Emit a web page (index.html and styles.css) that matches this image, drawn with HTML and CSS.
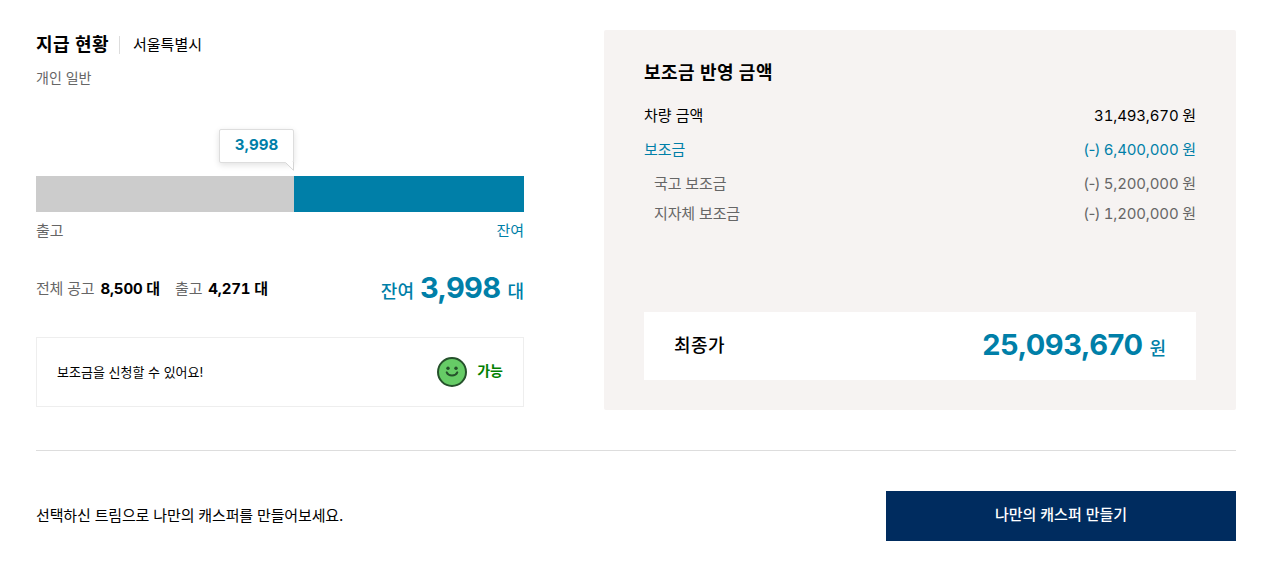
FILE: index.html
```html
<!DOCTYPE html>
<html lang="ko">
<head>
    <meta charset="UTF-8">
    <meta name="viewport" content="width=device-width, initial-scale=1.0">
    <title>보조금 지급 현황</title>
    <link rel="stylesheet" href="styles.css">
</head>
<body>
    <div class="subsidy">
        <section class="status">
            <div class="status-head">
                <h2>지급 현황</h2>
                <span class="region">서울특별시</span>
            </div>
            <p class="type">개인 일반</p>

            <div class="graph">
                <div class="bar">
                    <div class="bar-out" style="width: 258px">
                        <div class="tooltip">
                            <b>3,998</b>
                            <svg class="tail" width="9" height="9" viewBox="0 0 9 9">
                                <path d="M0 0H8V8Z" fill="#fff"/>
                                <path d="M0.5 0.5L8.5 8.3V0" fill="none" stroke="#d5d5d5"/>
                            </svg>
                        </div>
                    </div>
                </div>
                <div class="bar-label">
                    <span>출고</span>
                    <span class="blue">잔여</span>
                </div>
            </div>

            <div class="count">
                <div class="count-list">
                    <span class="c-label">전체 공고</span><b class="c-total">8,500 대</b>
                    <span class="c-label">출고</span><b>4,271 대</b>
                </div>
                <div class="remain">
                    <span>잔여</span><strong>3,998</strong><span>대</span>
                </div>
            </div>

            <div class="apply">
                <p>보조금을 신청할 수 있어요!</p>
                <div class="possible">
                    <svg width="30" height="30" viewBox="0 0 30 30">
                        <circle cx="15" cy="15" r="14" fill="#66cc66" stroke="#25512b" stroke-width="2"/>
                        <circle cx="11" cy="11.2" r="1.7" fill="#25512b"/>
                        <circle cx="19" cy="11.2" r="1.7" fill="#25512b"/>
                        <path d="M9.7 15.4C11.5 19.6 18.5 19.6 20.3 15.4" fill="none" stroke="#25512b" stroke-width="2" stroke-linecap="round"/>
                    </svg>
                    <span>가능</span>
                </div>
            </div>
        </section>

        <section class="price">
            <h2>보조금 반영 금액</h2>
            <dl class="price-list">
                <div class="row"><dt>차량 금액</dt><dd>31,493,670 원</dd></div>
                <div class="row blue"><dt>보조금</dt><dd><span class="minus">(-)</span> 6,400,000 원</dd></div>
                <div class="row sub"><dt>국고 보조금</dt><dd><span class="minus">(-)</span> 5,200,000 원</dd></div>
                <div class="row sub"><dt>지자체 보조금</dt><dd><span class="minus">(-)</span> 1,200,000 원</dd></div>
            </dl>
            <div class="final">
                <span class="final-label">최종가</span>
                <p><strong>25,093,670</strong><span class="final-unit">원</span></p>
            </div>
        </section>
    </div>

    <div class="make">
        <p>선택하신 트림으로 나만의 캐스퍼를 만들어보세요.</p>
        <button type="button">나만의 캐스퍼 만들기</button>
    </div>
</body>
</html>
```

FILE: styles.css
```css
* {
    box-sizing: border-box;
    margin: 0;
    padding: 0;
}
body {
    width: 1200px;
    margin: 0 0 0 36px;
    padding-top: 30px;
    font-family: Inter, 'Noto Sans CJK KR', sans-serif;
    font-size: 15px;
    line-height: 20px;
    color: #000;
    background: #fff;
}
.blue {
    color: #007fa8;
}
.subsidy {
    display: flex;
    justify-content: space-between;
    height: 421px;
    border-bottom: 1px solid #ddd;
}
h2 {
    font-size: 18px;
    font-weight: 700;
    line-height: 28px;
    letter-spacing: 0.5px;
}

/* 지급 현황 */
.status {
    width: 488px;
}
.status-head {
    display: flex;
    align-items: center;
    height: 30px;
}
.region {
    display: flex;
    align-items: center;
    margin-left: 10px;
    padding: 0 0 1px 13px;
    height: 18px;
    border-left: 1px solid #ddd;
}
.type {
    margin-top: 8px;
    font-size: 14px;
    color: #666;
}
.graph {
    margin-top: 88px;
}
.bar {
    height: 36px;
    background: #007fa8;
}
.bar-out {
    position: relative;
    height: 36px;
    background: #ccc;
}
.tooltip {
    position: absolute;
    right: 0;
    bottom: 49px;
    width: 75px;
    height: 34px;
    border: 1px solid #ddd;
    border-radius: 2px;
    background: #fff;
    box-shadow: 0 2px 6px rgba(0, 0, 0, 0.12);
    line-height: 29px;
    text-align: center;
    color: #007fa8;
}
.tail {
    position: absolute;
    right: -1px;
    top: 32px;
}
.bar-label {
    display: flex;
    justify-content: space-between;
    margin-top: 9px;
    color: #666;
}
.bar-label .blue {
    color: #007fa8;
}
.count {
    display: flex;
    justify-content: space-between;
    align-items: center;
    height: 40px;
    margin-top: 28px;
}
.count-list {
    display: flex;
    letter-spacing: -0.2px;
}
.count-list b {
    margin-left: 6px;
    font-weight: 700;
    font-variant-numeric: tabular-nums;
    letter-spacing: -0.15px;
}
.c-label {
    color: #666;
}
.count-list .c-total {
    margin-right: 15px;
}
.remain {
    display: flex;
    align-items: baseline;
    padding-top: 2px;
    font-size: 18px;
    font-weight: 500;
    line-height: 40px;
    color: #007fa8;
}
.remain strong {
    margin: 0 7px 0 6px;
    font-size: 29px;
    font-weight: 650;
    letter-spacing: -0.7px;
}
.apply {
    display: flex;
    justify-content: space-between;
    align-items: center;
    height: 70px;
    margin-top: 28px;
    padding: 0 20px;
    border: 1px solid #eee;
    font-size: 13px;
}
.possible {
    display: flex;
    align-items: center;
    gap: 10px;
    font-size: 14px;
    font-weight: 700;
    color: #008000;
}
.possible span {
    padding-bottom: 2px;
}

/* 보조금 반영 금액 */
.price {
    display: flex;
    flex-direction: column;
    width: 632px;
    height: 380px;
    padding: 29px 40px 30px;
    border-radius: 2px;
    background: #f6f3f2;
}
.price-list {
    margin-top: 19px;
}
.row {
    display: flex;
    justify-content: space-between;
    margin-bottom: 14px;
}
.row dd {
    font-variant-numeric: tabular-nums;
    letter-spacing: -0.15px;
}
.minus {
    font-variant-numeric: normal;
    letter-spacing: -0.5px;
}
.sub {
    margin-bottom: 10px;
    color: #666;
}
.sub dt {
    padding-left: 10px;
    letter-spacing: -0.15px;
}
.final {
    display: flex;
    justify-content: space-between;
    align-items: center;
    height: 68px;
    margin-top: auto;
    padding: 0 30px;
    background: #fff;
}
.final-label {
    font-size: 18px;
    font-weight: 500;
    letter-spacing: 0.5px;
}
.final p {
    display: flex;
    align-items: baseline;
    padding-top: 2px;
    color: #007fa8;
    line-height: 40px;
}
.final strong {
    font-size: 29px;
    font-weight: 650;
    letter-spacing: -0.5px;
}
.final-unit {
    margin-left: 7px;
    font-size: 18px;
    font-weight: 500;
}

.make {
    display: flex;
    justify-content: space-between;
    align-items: center;
    padding-top: 40px;
}
.make p {
    letter-spacing: -0.15px;
}
.make button {
    width: 350px;
    height: 50px;
    padding-bottom: 5px;
    border: 0;
    background: #002c5f;
    color: #fff;
    font-family: inherit;
    font-size: 15px;
    font-weight: 500;
    cursor: pointer;
}
```
